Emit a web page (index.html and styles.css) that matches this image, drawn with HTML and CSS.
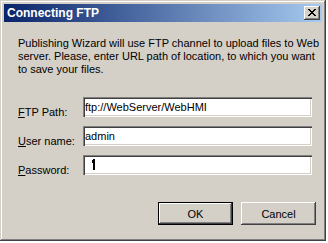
FILE: index.html
```html
<!DOCTYPE html>
<html lang="en">
<head>
    <meta charset="UTF-8">
    <title>Connecting FTP</title>
    <link rel="stylesheet" href="styles.css">
</head>
<body>
    <div class="window">
      <div class="titlebar">
        <span class="title">Connecting FTP</span>
        <button class="close-btn" type="button">
          <svg width="8" height="7" viewBox="0 0 8 7">
            <path d="M0 0h2v1h1v1h2V1h1V0h2v1H7v1H6v1H5v1h1v1h1v1h1v1H6V6H5V5H3v1H2v1H0V6h1V5h1V4h1V3H2V2H1V1H0z" fill="#000"/>
          </svg>
        </button>
      </div>

      <div class="client">
        <p class="intro">
          Publishing Wizard will use FTP channel to upload files to Web<br>
          server. Please, enter URL path of location, to which you want<br>
          to save your files.
        </p>

        <form class="ftp-form">
          <label for="ftpPath"><u>F</u>TP Path:</label>
          <input type="text" id="ftpPath" value="ftp://WebServer/WebHMI">

          <label for="userName"><u>U</u>ser name:</label>
          <input type="text" id="userName" value="admin">

          <label for="password"><u>P</u>assword:</label>
          <div class="field-wrap">
            <input type="password" id="password">
            <span class="caret"></span>
          </div>
        </form>

        <div class="buttons">
          <button class="btn default" type="button">OK</button>
          <button class="btn" type="button">Cancel</button>
        </div>
      </div>
    </div>
</body>
</html>
```

FILE: styles.css
```css
* {
    box-sizing: border-box;
    margin: 0;
    padding: 0;
}

body {
    background: #fff;
    font-family: 'Liberation Sans', Arial, sans-serif;
    font-size: 11px;
    color: #000;
}

.window {
    width: 326px;
    height: 241px;
    background: #d4d0c8;
    padding: 4px;
    display: flex;
    flex-direction: column;
    box-shadow: inset -1px -1px #404040, inset 1px 1px #d4d0c8,
                inset -2px -2px #808080, inset 2px 2px #fff;
}

.titlebar {
    height: 18px;
    display: flex;
    align-items: center;
    justify-content: space-between;
    padding: 0 2px 0 3px;
    background: linear-gradient(to right, #0a246a, #a6caf0);
}

.title {
    color: #fff;
    font-weight: bold;
    font-size: 12px;
}

.close-btn {
    width: 16px;
    height: 14px;
    border: none;
    background: #d4d0c8;
    display: flex;
    align-items: center;
    justify-content: center;
    padding: 0 1px 1px 0;
    box-shadow: inset -1px -1px #404040, inset 1px 1px #fff,
                inset -2px -2px #808080, inset 2px 2px #d4d0c8;
}

.client {
    flex: 1;
    padding: 15px 10px 0 14px;
}

.intro {
    line-height: 13px;
    white-space: nowrap;
}

.ftp-form {
    display: grid;
    grid-template-columns: 65px 229px;
    grid-auto-rows: 20px;
    row-gap: 9px;
    margin-top: 21px;
}

.ftp-form label {
    padding-top: 9px;
    line-height: 13px;
}

.ftp-form input {
    width: 100%;
    height: 20px;
    border: none;
    outline: none;
    background: #fff;
    padding: 0 2px;
    font-family: 'Liberation Sans', Arial, sans-serif;
    font-size: 11px;
    color: #000;
    box-shadow: inset 1px 1px #808080, inset 2px 2px #404040,
                inset -1px -1px #fff, inset -2px -2px #d4d0c8;
}

.field-wrap {
    position: relative;
}

.caret {
    position: absolute;
    left: 10px;
    top: 4px;
    width: 2px;
    height: 11px;
    background: #000;
}

.caret::before {
    content: "";
    position: absolute;
    left: -1px;
    top: 1px;
    width: 1px;
    height: 3px;
    background: #000;
}

.buttons {
    display: flex;
    justify-content: flex-end;
    gap: 8px;
    margin-top: 27px;
    width: 298px;
}

.btn {
    width: 75px;
    height: 23px;
    border: none;
    background: #d4d0c8;
    font-family: 'Liberation Sans', Arial, sans-serif;
    font-size: 11px;
    color: #000;
    box-shadow: inset -1px -1px #404040, inset 1px 1px #fff,
                inset -2px -2px #808080, inset 2px 2px #d4d0c8;
}

.btn.default {
    box-shadow: inset 0 0 0 1px #000, inset -2px -2px #404040, inset 2px 2px #fff,
                inset -3px -3px #808080;
}
```
